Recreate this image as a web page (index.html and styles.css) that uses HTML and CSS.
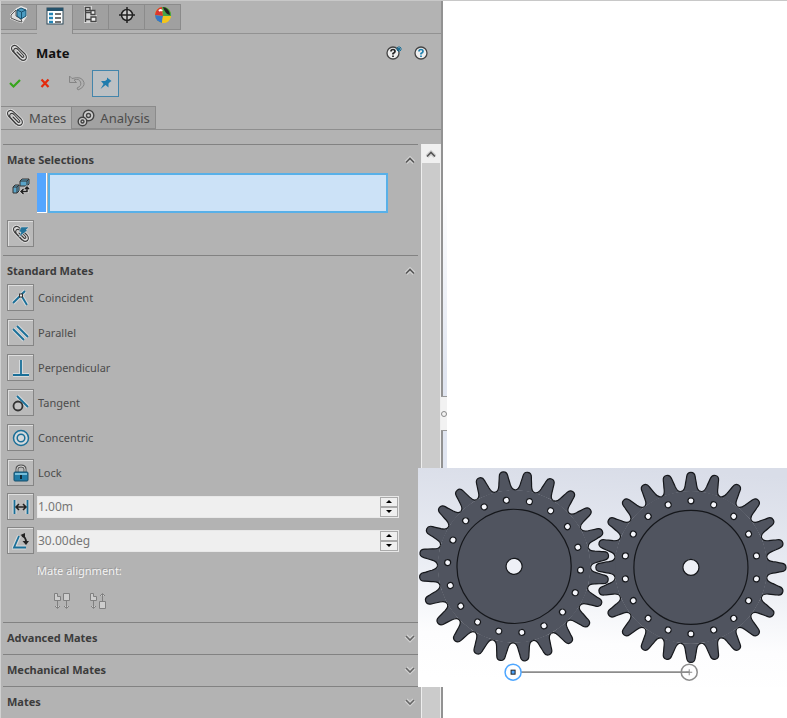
FILE: index.html
```html
<!DOCTYPE html>
<html lang="en">

<head>
    <meta charset="UTF-8">
    <meta name="viewport" content="width=device-width, initial-scale=1.0">
    <title>Mate</title>
    <link rel="stylesheet" href="styles.css">
</head>

<body>
    <svg class="defs" aria-hidden="true">
        <symbol id="clip" viewBox="0 0 18 18">
            <g fill="none" stroke-linecap="round" stroke-linejoin="round">
                <path d="M10 15L2.500 7Q.5 4 2.500 2.200Q5 .3 7.500 2.800L15 10Q17.500 13 15.500 15.500Q13 17.500 10.500 15L4.500 8.500Q3 6.500 4.300 5Q6 3.500 8 5.500L13.500 11.500Q14.500 13.500 12.500 13.500L7 8" stroke="#dedede" stroke-width="3" />
                <path d="M10 15L2.500 7Q.5 4 2.500 2.200Q5 .3 7.500 2.800L15 10Q17.500 13 15.500 15.500Q13 17.500 10.500 15L4.500 8.500Q3 6.500 4.300 5Q6 3.500 8 5.500L13.500 11.500Q14.500 13.500 12.500 13.500L7 8" stroke="#3c3c3c" stroke-width="1.100" />
            </g>
        </symbol>
        <symbol id="up" viewBox="0 0 12 12">
            <path d="M2 8.500L6 4.500L10 8.500" fill="none" stroke="#d2d2d2" stroke-width="4" />
            <path d="M2 8.500L6 4.500L10 8.500" fill="none" stroke="#555" stroke-width="1.600" />
        </symbol>
        <symbol id="down" viewBox="0 0 12 12">
            <path d="M2 4L6 8L10 4" fill="none" stroke="#d2d2d2" stroke-width="4" />
            <path d="M2 4L6 8L10 4" fill="none" stroke="#666" stroke-width="1.600" />
        </symbol>
        <path id="tooth" d="M-9.980 -75.850C-7.600 -76.150 -6.300 -78 -5.700 -82C-5.200 -86 -4.600 -87.500 -4.300 -90.500C-3.900 -93.800 -2.200 -95 0 -95C2.200 -95 3.900 -93.800 4.300 -90.500C4.600 -87.500 5.200 -86 5.700 -82C6.300 -78 7.600 -76.150 9.980 -75.850" />
        <g id="six-teeth">
            <use href="#tooth" />
            <use href="#tooth" transform="rotate(15)" />
            <use href="#tooth" transform="rotate(30)" />
            <use href="#tooth" transform="rotate(45)" />
            <use href="#tooth" transform="rotate(60)" />
            <use href="#tooth" transform="rotate(75)" />
        </g>
        <g id="gear">
            <circle r="76.300" stroke="none" />
            <use href="#six-teeth" />
            <use href="#six-teeth" transform="rotate(90)" />
            <use href="#six-teeth" transform="rotate(180)" />
            <use href="#six-teeth" transform="rotate(270)" />
            <circle r="57" />
            <circle r="8" fill="#eef0f6" />
        </g>
        <circle id="hole" cy="-66.500" r="3" fill="#f4f5fa" />
        <g id="six-holes">
            <use href="#hole" />
            <use href="#hole" transform="rotate(20)" />
            <use href="#hole" transform="rotate(40)" />
            <use href="#hole" transform="rotate(60)" />
            <use href="#hole" transform="rotate(80)" />
            <use href="#hole" transform="rotate(100)" />
        </g>
        <g id="holes">
            <use href="#six-holes" />
            <use href="#six-holes" transform="rotate(120)" />
            <use href="#six-holes" transform="rotate(240)" />
        </g>
    </svg>

    <div class="app">
        <aside class="panel">
            <nav class="manager-tabs">
                <button type="button" aria-label="Feature tree">
                    <svg width="18" height="18" viewBox="0 0 18 18">
                        <path d="M1 9L7 3L11 1L16 3V10L12 16L8 15L1 12Z" fill="#e6e6e6" stroke="#e6e6e6" stroke-width="2" />
                        <path d="M1 9L6 4V10L11 13L12 16L8 15L1 12Z" fill="#ddd" stroke="#555" />
                        <path d="M7 4L11 2L16 4V10L11 13L7 10Z" fill="#4b9cc2" stroke="#17506f" />
                        <path d="M7 4L11.500 6L16 4M11.500 6V13" fill="none" stroke="#17506f" />
                    </svg>
                </button>
                <button type="button" class="active" aria-label="Property manager">
                    <svg width="18" height="18" viewBox="0 0 18 18">
                        <rect x="1" y="1" width="16" height="16" fill="#fff" stroke="#2e4a5a" />
                        <path d="M1 2.500H17" stroke="#24526b" stroke-width="3" />
                        <path d="M3 7H7M3 11H7M3 15H7" stroke="#2384b5" stroke-width="2.400" />
                        <path d="M9 7H15M9 11H15M9 15H15" stroke="#444" stroke-width="1.300" />
                    </svg>
                </button>
                <button type="button" aria-label="Configurations">
                    <svg width="18" height="18" viewBox="0 0 18 18">
                        <path d="M2 0H10V4H14V9H15V17H2Z" fill="#d6d6d6" />
                        <path d="M3.500 1V16M3.500 6.500H10M3.500 13.500H10" fill="none" stroke="#444" stroke-width="1.400" />
                        <path d="M3.500 1.500H8V4.500H3.500ZM9 4.500H13V8.500H9ZM9 11H14V15.500H9Z" fill="#eee" stroke="#444" stroke-width="1.300" />
                    </svg>
                </button>
                <button type="button" aria-label="Dimensions">
                    <svg width="18" height="18" viewBox="0 0 18 18">
                        <circle cx="9" cy="9" r="5.500" fill="#ccc" stroke="#222" stroke-width="1.500" />
                        <path d="M9 1V17M1 9H17" stroke="#222" stroke-width="1.500" />
                    </svg>
                </button>
                <button type="button" aria-label="Display">
                    <svg width="18" height="18" viewBox="0 0 18 18">
                        <circle cx="9" cy="9" r="8" fill="#f3c51c" />
                        <path d="M9 10L1 9A8 8 0 0 1 8 1Z" fill="#d93630" />
                        <path d="M9 10L1 9A8 8 0 0 0 8 17Z" fill="#3777c8" />
                        <path d="M9 10L8 1A8 8 0 0 1 17 10Z" fill="#46a449" />
                        <path d="M9 1A8 8 0 0 1 16 9Q11 8 9 1Z" fill="#222" />
                        <path d="M9 10L17 10A8 8 0 0 1 8 17Z" fill="#f3c51c" />
                        <path d="M5 5Q7 3 8 5" fill="none" stroke="#fff" stroke-width="2" />
                    </svg>
                </button>
            </nav>

            <header class="title">
                <svg width="18" height="18"><use href="#clip" /></svg>
                <h1>Mate</h1>
                <button type="button" class="plain" aria-label="What's new">
                    <svg width="18" height="18" viewBox="0 0 18 18">
                        <circle cx="8" cy="9" r="6" fill="#eee" stroke="#444" stroke-width="1.300" />
                        <path d="M6 7.500Q6 5.500 8 5.500T10 7.500Q10 8.500 8 9.500V10.500M8 11.500V13" fill="none" stroke="#222" stroke-width="1.700" />
                        <path d="M14 2V8M11 5H17M12 3L16 7M16 3L12 7" stroke="#1d7198" />
                    </svg>
                </button>
                <button type="button" class="plain" aria-label="Help">
                    <svg width="18" height="18" viewBox="0 0 18 18">
                        <circle cx="9" cy="9" r="6" fill="#eee" stroke="#444" stroke-width="1.300" />
                        <path d="M7 7.500Q7 5.500 9 5.500T11 7.500Q11 8.500 9 9.500V10.500M9 11.500V13" fill="none" stroke="#1d7fae" stroke-width="1.700" />
                    </svg>
                </button>
            </header>

            <div class="actions">
                <button type="button" class="plain" aria-label="OK">
                    <svg width="14" height="14" viewBox="0 0 14 14"><path d="M2 7L5.500 10.500L12 4" fill="none" stroke="#37a51c" stroke-width="2.200" /></svg>
                </button>
                <button type="button" class="plain" aria-label="Cancel">
                    <svg width="14" height="14" viewBox="0 0 14 14"><path d="M3.500 3.500L10.500 11M10.500 3.500L3.500 11" stroke="#e42a0c" stroke-width="2.200" /></svg>
                </button>
                <button type="button" class="plain" aria-label="Undo">
                    <svg width="18" height="18" viewBox="0 0 18 18"><path d="M1.500 2V8.500H8.500L6 6Q11 4 12.500 8T9 14L10 16Q17 13 16 8.500Q14 1.500 4 4.500Z" fill="#b0b0b0" stroke="#858585" /></svg>
                </button>
                <button type="button" class="pin" aria-label="Keep visible">
                    <svg width="14" height="14" viewBox="0 0 14 14"><path d="M8 1.500L12.500 5L11 6L9.500 7.500L9.500 11.500L6.500 9L1.500 13L4.500 8L2 5L6 5L8 3.500Z" fill="#207cad" /></svg>
                </button>
            </div>

            <nav class="page-tabs">
                <button type="button" class="active"><svg width="18" height="18"><use href="#clip" /></svg>Mates</button>
                <button type="button">
                    <svg width="18" height="18" viewBox="0 0 18 18">
                        <g fill="#ccc" stroke="#444" stroke-width="1.400">
                            <circle cx="11.500" cy="6.500" r="5.300" />
                            <circle cx="5.500" cy="12.500" r="4.300" />
                            <circle cx="11.500" cy="6.500" r="2" />
                            <circle cx="5.500" cy="12.500" r="1.500" />
                        </g>
                    </svg>Analysis
                </button>
            </nav>

            <div class="scroll-area">
                <div class="groups">
                    <section class="selections">
                        <h2>Mate Selections <svg width="12" height="12"><use href="#up" /></svg></h2>
                        <div class="pick">
                            <svg width="18" height="18" viewBox="0 0 18 18">
                                <path d="M1 9L3 7H7V13L5 15H1ZM8 3L10 1H17V6L15 8H8Z" fill="#5aa5c9" stroke="#333" />
                                <path d="M1 9H5V15M5 9L7 7M8 3H15L17 1M15 3V8" fill="none" stroke="#333" />
                                <path d="M9 13.500H15V9.500M11.500 11L9 13.500L11.500 16M13 11L15 9L17 11" fill="none" stroke="#ddd" stroke-width="3" />
                                <path d="M9 13.500H15V9.500M11.500 11L9 13.500L11.500 16M13 11L15 9L17 11" fill="none" stroke="#222" stroke-width="1.500" />
                            </svg>
                            <span class="swatch"></span>
                            <input type="text" aria-label="Entities to mate">
                        </div>
                        <button type="button" class="tool" aria-label="Multiple mate mode">
                            <svg width="18" height="18" viewBox="0 0 18 18">
                                <use href="#clip" />
                                <path d="M9 2H17L14 5H16L7 12L9 7H7Z" fill="#23739a" stroke="#ddd" stroke-width=".5" />
                            </svg>
                        </button>
                    </section>

                    <section class="standard">
                        <h2>Standard Mates <svg width="12" height="12"><use href="#up" /></svg></h2>
                        <ul>
                            <li>
                                <button type="button" class="tool" id="coincident">
                                    <svg width="18" height="18" viewBox="0 0 18 18">
                                        <path d="M1 14L13 2M9 6L15 16" stroke="#d6dadc" stroke-width="4" />
                                        <path d="M1 14L13 2M9 6L15 16" stroke="#1a6f98" stroke-width="1.800" />
                                        <rect x="7.500" y="5" width="3" height="3" fill="#eee" stroke="#333" />
                                    </svg>
                                </button>
                                <label for="coincident">Coincident</label>
                            </li>
                            <li>
                                <button type="button" class="tool" id="parallel">
                                    <svg width="18" height="18" viewBox="0 0 18 18">
                                        <path d="M1 5L12 16M5 2L16 13" stroke="#d6dadc" stroke-width="4" />
                                        <path d="M1 5L12 16M5 2L16 13" stroke="#1a6f98" stroke-width="1.800" />
                                    </svg>
                                </button>
                                <label for="parallel">Parallel</label>
                            </li>
                            <li>
                                <button type="button" class="tool" id="perpendicular">
                                    <svg width="18" height="18" viewBox="0 0 18 18">
                                        <path d="M9 1V16M1 16H17" stroke="#d6dadc" stroke-width="4" />
                                        <path d="M9 1V16M1 16H17" stroke="#1a6f98" stroke-width="1.800" />
                                    </svg>
                                </button>
                                <label for="perpendicular">Perpendicular</label>
                            </li>
                            <li>
                                <button type="button" class="tool" id="tangent">
                                    <svg width="18" height="18" viewBox="0 0 18 18">
                                        <path d="M5 2L16 13" stroke="#d6dadc" stroke-width="4" />
                                        <circle cx="6" cy="12" r="4.500" fill="#c4c4c4" stroke="#333" stroke-width="1.800" />
                                        <path d="M5 2L16 13" stroke="#1a6f98" stroke-width="1.800" />
                                    </svg>
                                </button>
                                <label for="tangent">Tangent</label>
                            </li>
                            <li>
                                <button type="button" class="tool" id="concentric">
                                    <svg width="18" height="18" viewBox="0 0 18 18">
                                        <g fill="none" stroke="#1a6f98" stroke-width="1.500">
                                            <circle cx="9" cy="9" r="7.500" fill="#d6dadc" />
                                            <circle cx="9" cy="9" r="3.800" />
                                        </g>
                                    </svg>
                                </button>
                                <label for="concentric">Concentric</label>
                            </li>
                            <li>
                                <button type="button" class="tool" id="lock">
                                    <svg width="18" height="18" viewBox="0 0 18 18">
                                        <path d="M5 8V5Q5 2 9 2T13 5V8" fill="none" stroke="#555" stroke-width="3" />
                                        <path d="M5 8V5Q5 2 9 2T13 5V8" fill="none" stroke="#ddd" />
                                        <rect x="2" y="8" width="14" height="9" rx="1" fill="#207ba6" stroke="#174e6b" />
                                        <path d="M3 10H15" stroke="#77bdd9" stroke-width="2" />
                                        <path d="M9 11V15" stroke="#122a36" stroke-width="2" />
                                    </svg>
                                </button>
                                <label for="lock">Lock</label>
                            </li>
                            <li class="value">
                                <button type="button" class="tool" aria-label="Distance">
                                    <svg width="18" height="18" viewBox="0 0 18 18">
                                        <path d="M2.500 2V16M15.500 2V16" stroke="#d6dadc" stroke-width="4" />
                                        <path d="M2.500 2V16M15.500 2V16" stroke="#1a6f98" stroke-width="1.800" />
                                        <path d="M4 9H14M7 6L4 9L7 12M11 6L14 9L11 12" fill="none" stroke="#222" stroke-width="1.500" />
                                    </svg>
                                </button>
                                <div class="spin">
                                    <input type="text" value="1.00m" aria-label="Distance value">
                                    <button type="button" aria-label="Increase distance"><i class="tri-up"></i></button>
                                    <button type="button" aria-label="Decrease distance"><i class="tri-down"></i></button>
                                </div>
                            </li>
                            <li class="value">
                                <button type="button" class="tool" aria-label="Angle">
                                    <svg width="18" height="18" viewBox="0 0 18 18">
                                        <path d="M7 4L2 15.500H14" fill="none" stroke="#d6dadc" stroke-width="4" />
                                        <path d="M7 4L2 15.500H14" fill="none" stroke="#1a6f98" stroke-width="1.800" />
                                        <path d="M10 4Q14 5 14 10" fill="none" stroke="#222" stroke-width="1.800" />
                                        <path d="M8.500 3L13 1V6ZM10.500 9H17L14 13Z" fill="#222" />
                                    </svg>
                                </button>
                                <div class="spin">
                                    <input type="text" value="30.00deg" aria-label="Angle value">
                                    <button type="button" aria-label="Increase angle"><i class="tri-up"></i></button>
                                    <button type="button" aria-label="Decrease angle"><i class="tri-down"></i></button>
                                </div>
                            </li>
                        </ul>
                        <p class="alignment">Mate alignment:</p>
                        <div class="align-buttons">
                            <button type="button" class="plain" aria-label="Aligned" disabled>
                                <svg width="18" height="18" viewBox="0 0 18 18">
                                    <path d="M1.500 1.500H4.500V4.500H7.500V8.500H1.500ZM10.500 1.500H16.500V8.500H10.500ZM4.500 9V16M2 14L4.500 16.500L7 14M13.500 9V16M11 14L13.500 16.500L16 14" fill="#cdcdcd" stroke="#808080" />
                                </svg>
                            </button>
                            <button type="button" class="plain" aria-label="Anti-aligned" disabled>
                                <svg width="18" height="18" viewBox="0 0 18 18">
                                    <path d="M1.500 1.500H4.500V4.500H7.500V8.500H1.500ZM10.500 9.500H16.500V16.500H10.500ZM4.500 9V16M2 14L4.500 16.500L7 14M13.500 9V2M11 4L13.500 1.500L16 4" fill="#cdcdcd" stroke="#808080" />
                                </svg>
                            </button>
                        </div>
                    </section>

                    <section class="closed"><h2>Advanced Mates <svg width="12" height="12"><use href="#down" /></svg></h2></section>
                    <section class="closed"><h2>Mechanical Mates <svg width="12" height="12"><use href="#down" /></svg></h2></section>
                    <section class="closed"><h2>Mates <svg width="12" height="12"><use href="#down" /></svg></h2></section>
                </div>
                <div class="scrollbar">
                    <button type="button" aria-label="Scroll up">
                        <svg width="12" height="12"><use href="#up" /></svg>
                    </button>
                </div>
            </div>
        </aside>

        <main class="graphics">
            <div class="edge"></div>
            <button type="button" class="splitter" aria-label="Collapse panel"></button>
            <svg class="model" viewBox="0 0 369 219" role="img" aria-label="Two meshing gears">
                <defs>
                    <linearGradient id="sky" x1=".6" y1="0" x2=".5" y2="1">
                        <stop offset="0" stop-color="#d9dde8" />
                        <stop offset=".45" stop-color="#e9ecf3" />
                        <stop offset=".8" stop-color="#fdfdfe" />
                        <stop offset="1" stop-color="#fff" />
                    </linearGradient>
                </defs>
                <rect width="369" height="219" fill="url(#sky)" />
                <g fill="#50545f" stroke="#15171b" stroke-width="1.200">
                    <g transform="translate(96 98.300)">
                        <use href="#gear" transform="rotate(8.300)" />
                        <use href="#holes" transform="rotate(13.300)" />
                    </g>
                    <g transform="translate(272.700 99.300)">
                        <use href="#gear" />
                        <use href="#holes" />
                    </g>
                </g>
                <path d="M103 204H271" stroke="#8c8c8c" stroke-width="1.600" />
                <circle cx="95" cy="204" r="8" fill="none" stroke="#4da6ff" stroke-width="1.500" />
                <rect x="93" y="202" width="4" height="4" fill="#4da6ff" stroke="#222" />
                <circle cx="271" cy="204" r="8" fill="none" stroke="#8c8c8c" stroke-width="1.500" />
                <path d="M271 201V207M268 204H274" stroke="#8c8c8c" />
            </svg>
        </main>
    </div>
</body>

</html>
```
FILE: styles.css
```css
* {
    box-sizing: border-box;
}

body {
    font-family: "Noto Sans", "Open Sans", sans-serif;
    font-size: 11px;
    line-height: 16px;
    margin: 0;
    color: #4c4c4c;
    background-color: white;
}

h1,
h2,
p,
ul {
    margin: 0;
    padding: 0;
}

svg {
    display: block;
    flex: none;
}

button {
    font: inherit;
    color: inherit;
    padding: 0;
    display: flex;
    align-items: center;
    justify-content: center;
}

.defs {
    position: absolute;
    width: 0;
    height: 0;
}

.app {
    display: grid;
    grid-template-columns: 9fr 7fr;
    min-height: 100vh;
    border-top: 1px solid #c8c8c8;
}

.panel {
    display: flex;
    flex-direction: column;
    background-color: #b3b3b3;
    border-left: 1px solid #d0d0d0;
    border-right: 2px solid #929292;
}

.manager-tabs {
    display: flex;
    height: 33px;
    padding-top: 3px;
    border-bottom: 1px solid #929292;
}

.manager-tabs button {
    width: 36px;
    height: 26px;
    padding-bottom: 4px;
    background-color: #a0a0a0;
    border: 1px solid #8b8b8b;
    border-left: none;
}

.manager-tabs .active {
    height: 30px;
    padding-bottom: 8px;
    background-color: #b3b3b3;
    border-bottom: none;
}

.plain {
    background: none;
    border: none;
}

.title {
    display: flex;
    align-items: center;
    gap: 8px;
    height: 37px;
    padding: 0 11px 0 9px;
}

.title h1 {
    flex: 1;
    font-size: 13px;
    line-height: 20px;
    color: #111;
}

.title button + button {
    margin-left: 1px;
}

.actions {
    display: flex;
    align-items: center;
    gap: 16px;
    height: 24px;
    padding-left: 7px;
}

.actions .pin {
    width: 27px;
    height: 27px;
    margin-left: -10px;
    background-color: #bcc0c3;
    border: 1px solid #4385ab;
}

.page-tabs {
    display: flex;
    height: 24px;
    margin-top: 11px;
    font-size: 13px;
    border-bottom: 1px solid #8e8e8e;
}

.page-tabs button {
    gap: 5px;
    padding: 0 5px;
    background-color: #a2a2a2;
    border: 1px solid #8b8b8b;
    border-left: none;
}

.page-tabs .active {
    background-color: #b3b3b3;
    border-bottom: none;
}

.scroll-area {
    display: flex;
    flex: 1;
    margin-top: 14px;
}

.groups {
    flex: 1;
    padding: 0 3px 0 2px;
}

section {
    padding: 7px 2px 0 4px;
    border-top: 1px solid #828282;
}

h2 {
    display: flex;
    justify-content: space-between;
    align-items: center;
    font-size: 11px;
    line-height: 16px;
    color: #3c3c3c;
}

.selections {
    height: 111px;
}

.pick {
    display: flex;
    height: 40px;
    margin: 5px 28px 7px 4px;
}

.pick svg {
    margin: 5px 7px 0 1px;
}

.pick .swatch {
    width: 10px;
    background-color: #55a6ff;
    border-right: 1px solid white;
    border-bottom: 1px solid white;
}

.pick input {
    flex: 1;
    min-width: 0;
    margin-left: 1px;
    padding: 0 4px;
    background-color: #cce2f7;
    border: 2px solid #58b0e8;
}

.tool {
    flex: none;
    width: 27px;
    height: 27px;
    background-color: #bababa;
    border: 1px solid #858585;
    box-shadow: inset 1px 1px #dedede;
}

.standard {
    padding-bottom: 12px;
}

.standard ul {
    display: grid;
    gap: 8px;
    margin-top: 5px;
    list-style: none;
}

.standard li {
    display: flex;
    align-items: center;
    gap: 4px;
}

.standard .value {
    gap: 3px;
    margin-top: -1px;
    padding-right: 17px;
}

.spin {
    flex: 1;
    display: grid;
    grid-template-columns: 1fr 18px;
    grid-template-rows: 10px 10px;
    border: 1px solid #e8e8e8;
    background-color: #efefef;
}

.spin input {
    grid-row: 1 / 3;
    min-width: 0;
    padding: 0;
    font: inherit;
    font-size: 12px;
    color: #777;
    background: none;
    border: none;
}

.spin button {
    border: 1px solid #aaa;
    background-color: #efefef;
}

.tri-up,
.tri-down {
    border: 3px solid transparent;
}

.tri-up {
    border-top: none;
    border-bottom-color: black;
}

.tri-down {
    border-bottom: none;
    border-top-color: black;
}

.alignment {
    margin: 9px 0 0 30px;
    color: #f2f2f2;
    text-shadow: -1px -1px #999;
}

.align-buttons {
    display: flex;
    gap: 18px;
    margin: 13px 0 0 46px;
}

.closed {
    height: 32px;
}

.scrollbar {
    width: 20px;
    background-color: #cbcbcb;
    border-left: 1px solid #eee;
    border-right: 1px solid #eee;
}

.scrollbar button {
    width: 100%;
    height: 19px;
    background-color: #f0f0f0;
    border: none;
}

.graphics {
    position: relative;
    background-color: white;
}

.edge {
    width: 4px;
    height: 467px;
    background: linear-gradient(white 40%, #e0e5f0 80%);
}

.splitter {
    position: absolute;
    top: 395px;
    left: -2px;
    width: 6px;
    height: 35px;
    border: 1px solid #999;
    border-width: 1px 0;
    background-color: #f2f2f2;
}

.splitter::after {
    content: "";
    width: 4px;
    height: 4px;
    border: 1px solid #888;
    border-radius: 50%;
}

/* the model view overlaps the property panel */
.model {
    position: absolute;
    top: 467px;
    right: 0;
    width: calc(100% + 25px);
}
```
